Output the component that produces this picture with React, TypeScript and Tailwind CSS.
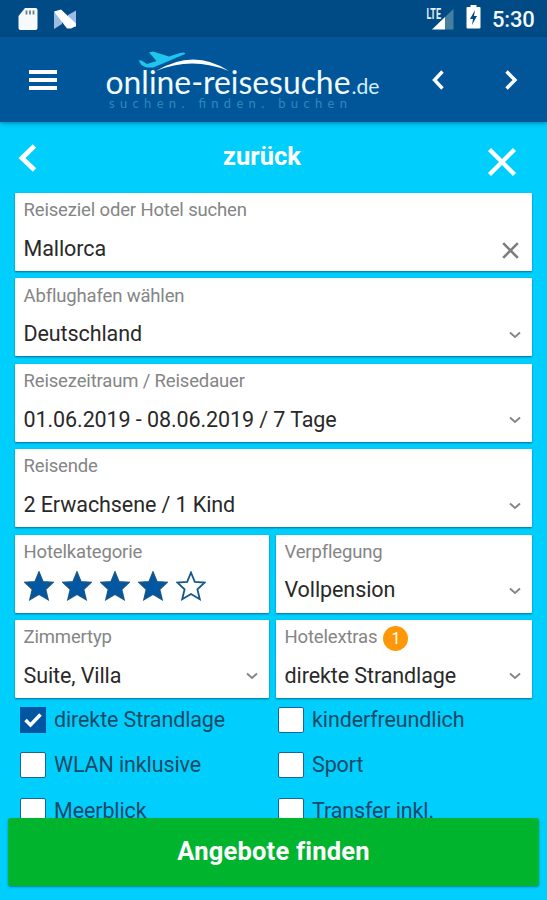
import type { ReactNode } from 'react';

const extras = [
  { label: 'direkte Strandlage', checked: true },
  { label: 'kinderfreundlich', checked: false },
  { label: 'WLAN inklusive', checked: false },
  { label: 'Sport', checked: false },
  { label: 'Meerblick', checked: false },
  { label: 'Transfer inkl.', checked: false },
];

const starPath =
  'M15 1.5 L18.8 10.8 L28.8 11.5 L21.4 18.3 L23.8 28.2 L15 23 L6.2 28.2 L8.6 18.3 L1.2 11.5 L11.2 10.8 Z';

function StatusBar() {
  return (
    <div className="flex h-[37px] items-center bg-[#004a86] pr-[11px] pl-[18px]">
      <svg width="20" height="24" viewBox="0 0 20 24" className="mt-px">
        <path d="M7 1h10.500q2 0 2 2v18q0 2-2 2h-15q-2 0-2-2V9z" fill="#f7fafc" />
        <path d="M8.500 3.500v4M12 3.500v4M15.500 3.500v4" stroke="#5f7f96" strokeWidth="1.800" />
      </svg>
      <svg width="24" height="22" viewBox="0 0 24 22" className="ml-[15px]">
        <path d="M1 4 9 9V16L1 21Z" fill="#9dbce2" />
        <path d="M15 7 23 2.500V19L15 15Z" fill="#9dbce2" />
        <path d="M1 3.500 8 1.500 23 15.500V18L18 20.500H14Z" fill="#fff" />
      </svg>
      <svg width="29" height="26" viewBox="0 0 29 26" className="ml-auto">
        <text x="0.500" y="12.500" fontSize="14" fontWeight="700" textLength="14.500" lengthAdjust="spacingAndGlyphs" fill="#e6f0f6" className="font-[Roboto,sans-serif]">
          LTE
        </text>
        <path d="M19 11 27.500 3V23.500H19Z" fill="#477f9f" />
        <path d="M6 23.500 19 11V23.500Z" fill="#fff" />
      </svg>
      <svg width="15" height="26" viewBox="0 0 15 26" className="mb-[3px] ml-[11px]">
        <path d="M4.500 1h6v2h3q1 0 1 1v19.500q0 1-1 1h-12q-1 0-1-1V4q0-1 1-1h3z" fill="#fff" />
        <path d="M9 6 4 15h3l-1 6 5-9H8z" fill="#004a86" />
      </svg>
      <span className="mt-[2px] ml-[11px] w-[44px] text-[22px] leading-none font-medium tracking-[-0.2px] whitespace-nowrap text-[#f3f8fb]">5:30</span>
    </div>
  );
}

function Logo() {
  return (
    <svg width="280" height="64" viewBox="0 0 280 64" className="ml-[46px]">
      <path
        d="M35.500 12.500 38.500 12.500 44 16 53.500 13 46 4.500 50 3.500 66 8.500 77 5Q83 3.500 82 6L61 15 50 19.500Q42 20 38.500 17Z"
        fill="#20c5ef"
      />
      <path d="M53 23Q91 0 126 23Q89 8 53 23Z" fill="#fff" />
      <text x="2.500" y="45.500" fontSize="33" textLength="245" lengthAdjust="spacingAndGlyphs" fill="#f0faff" className="font-[Lato,sans-serif]">
        online-reisesuche
      </text>
      <text x="248.500" y="46" fontSize="21" textLength="28" lengthAdjust="spacingAndGlyphs" fill="#d3edfa" className="font-[Lato,sans-serif]">
        .de
      </text>
      <text x="6" y="60" fontSize="13" textLength="238" fill="#2c89bf" className="font-[Lato,sans-serif]">
        suchen. finden. buchen
      </text>
    </svg>
  );
}

function Header() {
  return (
    <header className="relative flex h-[85px] items-center bg-[#005699] pl-[29px] shadow-[0_1px_4px_rgba(0,40,80,0.5)]">
      <div className="flex w-7 flex-col gap-1">
        <span className="h-1 bg-white" />
        <span className="h-1 bg-white" />
        <span className="h-1 bg-white" />
      </div>
      <Logo />
      <svg width="12" height="20" viewBox="0 0 12 20" className="ml-[49px]" fill="none" stroke="#fff" strokeWidth="3.400">
        <path d="M10.500 1.500 2.500 10 10.500 18.500" />
      </svg>
      <svg width="13" height="20" viewBox="0 0 13 20" className="ml-[61px]" fill="none" stroke="#fff" strokeWidth="3.400">
        <path d="M1.500 1.500 10 10 1.500 18.500" />
      </svg>
    </header>
  );
}

function Chevron() {
  return (
    <svg width="12" height="8" viewBox="0 0 12 8" className="mt-px mr-[3px]" fill="none" stroke="#858585" strokeWidth="1.900">
      <path d="M1 1.500 6 6 11 1.500" />
    </svg>
  );
}

type FieldProps = {
  label: string;
  value?: string;
  badge?: string;
  icon?: ReactNode;
  children?: ReactNode;
};

function Field({ label, value, badge, icon = <Chevron />, children }: FieldProps) {
  return (
    <div className="h-[78px] rounded-[1px] bg-white pt-px pr-2 pl-[8.500px] shadow-[0_1px_2px_rgba(0,50,80,0.6)]">
      <div className="flex h-[34px] items-center text-[18.500px] tracking-[-0.160px] text-[#858585]">
        {label}
        {badge && (
          <span className="mt-0.5 ml-[6px] flex h-[25px] w-[25px] items-center justify-center rounded-full bg-[#ff9808] text-[16px] text-white">{badge}</span>
        )}
      </div>
      {children ?? (
        <div className="flex h-[42px] items-center justify-between text-[21.500px] tracking-[-0.090px] text-[#292929]">
          {value}
          {icon}
        </div>
      )}
    </div>
  );
}

function Stars() {
  return (
    <div className="flex gap-2 pt-px">
      {[1, 2, 3, 4, 5].map((n) => (
        <svg key={n} width="30" height="30" viewBox="0 0 30 30">
          <path d={starPath} fill={n < 5 ? '#0058a2' : '#fff'} stroke="#15568b" strokeWidth="1.800" />
        </svg>
      ))}
    </div>
  );
}

function Checkbox({ label, checked }: { label: string; checked: boolean }) {
  return (
    <div className="flex h-[26px] items-center">
      <span className={checked ? 'h-[26px] w-[26px] bg-[#0056a0]' : 'h-[26px] w-[26px] rounded-[2px] border-[1.5px] border-[#17659b] bg-white'}>
        {checked && (
          <svg width="26" height="26" viewBox="0 0 26 26" fill="none" stroke="#fff" strokeWidth="3.500">
            <path d="M5.500 13 10.500 18 20.500 7.500" />
          </svg>
        )}
      </span>
      <span className="ml-2 text-[21.5px] tracking-[-0.12px] whitespace-nowrap text-[#1c4965]">{label}</span>
    </div>
  );
}

export default function App() {
  return (
    <div className="flex h-[900px] w-[547px] flex-col overflow-hidden bg-[#00cefd] font-[Roboto,sans-serif]">
      <StatusBar />
      <Header />
      <div className="flex h-[71px] shrink-0 items-center justify-between pr-[30px] pl-[18px]">
        <svg width="19" height="28" viewBox="0 0 19 28" fill="none" stroke="#fff" strokeWidth="4.800">
          <path d="M16.500 2 4 14 16.500 26" />
        </svg>
        <h1 className="mb-px text-[25.500px] leading-none font-bold text-white">zurück</h1>
        <svg width="30" height="30" viewBox="0 0 30 30" className="mt-2" fill="none" stroke="#fff" strokeWidth="4.300">
          <path d="M2.500 2.500 27.500 27.500M27.500 2.500 2.500 27.500" />
        </svg>
      </div>
      <main className="flex shrink-0 flex-col gap-[7.400px] px-[15px]">
        <Field
          label="Reiseziel oder Hotel suchen"
          value="Mallorca"
          icon={
            <svg width="17" height="17" viewBox="0 0 17 17" className="mt-0.5 mr-[5px]" fill="none" stroke="#7d7d7d" strokeWidth="2.600">
              <path d="M1.200 1.200 15.800 15.800M15.800 1.200 1.200 15.800" />
            </svg>
          }
        />
        <Field label="Abflughafen wählen" value="Deutschland" />
        <Field label="Reisezeitraum / Reisedauer" value="01.06.2019 - 08.06.2019 / 7 Tage" />
        <Field label="Reisende" value="2 Erwachsene / 1 Kind" />
        <div className="grid grid-cols-[254px_256px] gap-x-[7px] gap-y-[7.400px]">
          <Field label="Hotelkategorie">
            <Stars />
          </Field>
          <Field label="Verpflegung" value="Vollpension" />
          <Field label="Zimmertyp" value="Suite, Villa" />
          <Field label="Hotelextras" badge="1" value="direkte Strandlage" />
        </div>
      </main>
      <div className="grid h-[120px] shrink-0 grid-cols-[258px_1fr] content-start gap-y-[19.500px] overflow-hidden pt-[9px] pl-5">
        {extras.map((item) => (
          <Checkbox key={item.label} {...item} />
        ))}
      </div>
      <button className="mx-2 h-[68px] shrink-0 rounded-[3px] bg-[#00b42e] pb-[2px] text-[25.500px] font-bold tracking-[0.200px] text-white shadow-[0_1px_2px_rgba(0,50,80,0.5)]">
        Angebote finden
      </button>
    </div>
  );
}
